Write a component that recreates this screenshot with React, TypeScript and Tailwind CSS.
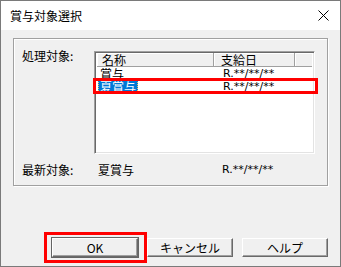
const rows = [
  { name: "賞与", date: "R.**/**/**", selected: false },
  { name: "夏賞与", date: "R.**/**/**", selected: true },
];

const Button = ({ label, isDefault }: { label: string; isDefault?: boolean }) => (
  <div className="relative">
    <button
      className={`w-[86px] h-[19px] flex items-center justify-center bg-[#f0f0f0] border border-t-white border-l-white border-r-[#696969] border-b-[#696969] shadow-[inset_-1px_-1px_0_#a0a0a0] text-[12px] leading-none ${
        isDefault ? "outline outline-1 outline-[#646464]" : ""
      }`}
    >
      {label}
    </button>
    {isDefault && (
      <div className="absolute -left-[8px] -top-[6px] -right-[9px] -bottom-[6px] border-[3px] border-[#ff0000] pointer-events-none" />
    )}
  </div>
);

export default function App() {
  return (
    <div className="w-[341px] h-[267px] flex flex-col bg-[#f0f0f0] border border-[#7a7a7a] font-['Noto_Sans_CJK_JP',sans-serif] text-[12px] text-black">
      <div className="h-[29px] shrink-0 bg-white flex items-center justify-between pl-[9px] pr-[11px]">
        <span className="text-[12px] leading-none">賞与対象選択</span>
        <svg width="11" height="11" viewBox="0 0 11 11">
          <path d="M0.5 0.5 L10.5 10.5 M10.5 0.5 L0.5 10.5" stroke="#000" strokeWidth="1" />
        </svg>
      </div>

      <div className="flex-1 px-[12px] pt-[8px] flex flex-col">
        <div className="h-[148px] border border-[#a0a0a0] shadow-[inset_1px_1px_0_#fff,1px_1px_0_#fff] pl-[8px] pt-[12px]">
          <div className="flex">
            <div className="w-[72px] leading-[14px] -mt-[2px]">処理対象:</div>
            <div className="relative w-[221px] h-[103px] bg-white border border-t-[#a0a0a0] border-l-[#a0a0a0] border-r-white border-b-white shadow-[inset_1px_1px_0_#696969,inset_-1px_-1px_0_#e3e3e3] p-[2px] pt-[1px]">
              <div className="flex h-[14px] leading-[14px] bg-[#f0f0f0]">
                <div className="w-[117px] pl-[5px] border-r border-[#a0a0a0] shadow-[inset_0_-1px_0_#a0a0a0,inset_1px_1px_0_#fff]">名称</div>
                <div className="w-[81px] pl-[7px] border-r border-[#a0a0a0] shadow-[inset_0_-1px_0_#a0a0a0,inset_1px_1px_0_#fff]">支給日</div>
                <div className="flex-1 shadow-[inset_0_-1px_0_#a0a0a0,inset_1px_1px_0_#fff]" />
              </div>
              {rows.map((r) => (
                <div key={r.name} className="flex h-[13px] leading-[13px]">
                  <div className="w-[118px] pl-[1px]">
                    <span
                      className={
                        r.selected
                          ? "inline-block h-[13px] px-[2px] bg-[#0078d7] text-white outline outline-1 outline-dotted outline-[#f3c463] -outline-offset-1"
                          : "inline-block h-[13px] px-[2px]"
                      }
                    >
                      {r.name}
                    </span>
                  </div>
                  <div className="pl-[8px] font-['DejaVu_Sans',sans-serif] text-[11px]">{r.date}</div>
                </div>
              ))}
              <div className="absolute left-[-2px] top-[26px] w-[225px] h-[16px] border-[3px] border-[#ff0000]" />
            </div>
          </div>
          <div className="flex mt-[9px] leading-[14px]">
            <div className="w-[76px]">最新対象:</div>
            <div className="w-[124px]">夏賞与</div>
            <div className="font-['DejaVu_Sans',sans-serif] text-[11px]">R.**/**/**</div>
          </div>
        </div>

        <div className="mt-[52px] flex justify-end gap-[9px]">
          <Button label="OK" isDefault />
          <Button label="キャンセル" />
          <Button label="ヘルプ" />
        </div>
      </div>
    </div>
  );
}
